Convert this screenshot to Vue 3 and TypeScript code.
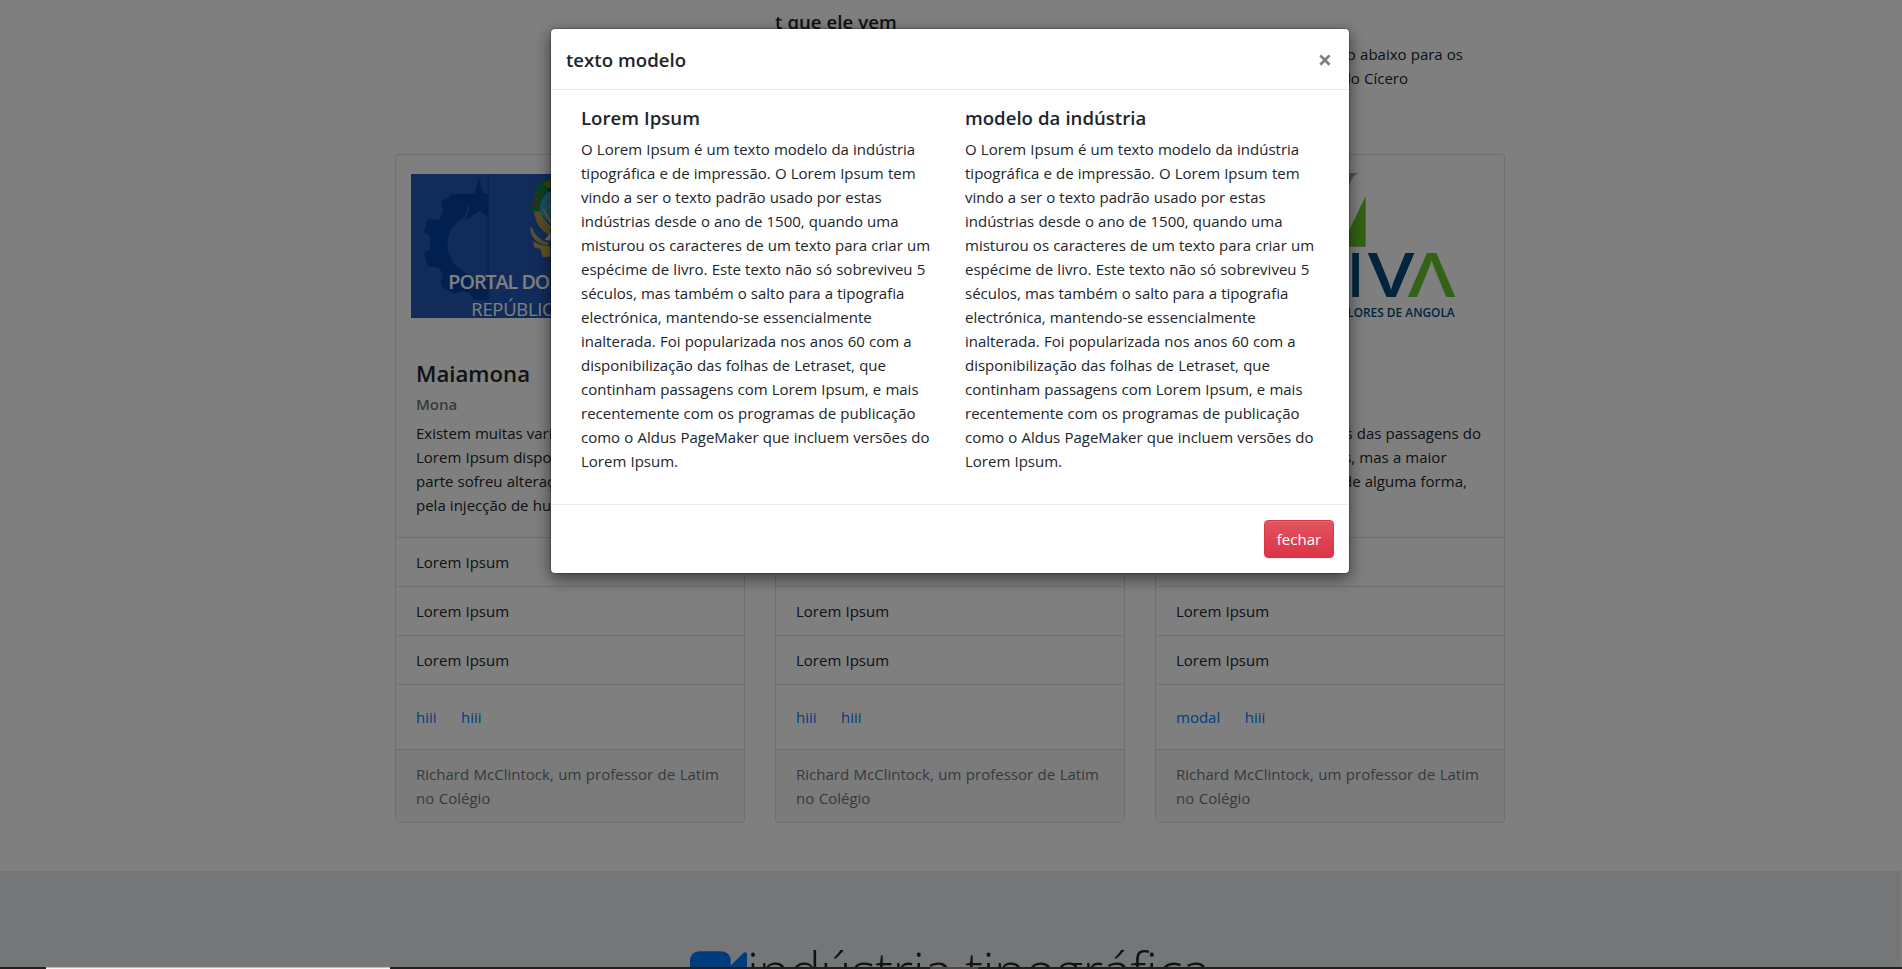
<script setup lang="ts">
interface CardData {
  logo: 'portal' | 'bodiva' | null
  title: string
  subtitle: string
  text: string[]
  links: string[]
}

const body: string[] = [
  'Existem muitas variações das passagens do',
  'Lorem Ipsum disponíveis, mas a maior',
  'parte sofreu alterações de alguma forma,',
  'pela injecção de humor',
]

const cards: CardData[] = [
  { logo: 'portal', title: 'Maiamona', subtitle: 'Mona', text: body, links: ['hiii', 'hiii'] },
  { logo: null, title: 'Maiamona', subtitle: 'Mona', text: body, links: ['hiii', 'hiii'] },
  { logo: 'bodiva', title: 'Maiamona', subtitle: 'Mona', text: body, links: ['modal', 'hiii'] },
]

const items: string[] = ['Lorem Ipsum', 'Lorem Ipsum', 'Lorem Ipsum']

const columns: string[] = ['Lorem Ipsum', 'modelo da indústria']

const lines: string[] = [
  'O Lorem Ipsum é um texto modelo da indústria',
  'tipográfica e de impressão. O Lorem Ipsum tem',
  'vindo a ser o texto padrão usado por estas',
  'indústrias desde o ano de 1500, quando uma',
  'misturou os caracteres de um texto para criar um',
  'espécime de livro. Este texto não só sobreviveu 5',
  'séculos, mas também o salto para a tipografia',
  'electrónica, mantendo-se essencialmente',
  'inalterada. Foi popularizada nos anos 60 com a',
  'disponibilização das folhas de Letraset, que',
  'continham passagens com Lorem Ipsum, e mais',
  'recentemente com os programas de publicação',
  'como o Aldus PageMaker que incluem versões do',
  'Lorem Ipsum.',
]
</script>

<template>
  <div class="screen">
    <main class="page">
      <section class="container">
        <header class="intro">
          <h5>t que ele vem</h5>
          <p>
            <span class="line first">está reproduzido abaixo para os</span>
            <span class="line second">interessados, segundo Cícero</span>
          </p>
        </header>

        <div class="deck">
          <article v-for="(card, i) in cards" :key="i" class="card">
            <div class="media">
              <svg v-if="card.logo === 'portal'" class="logo" viewBox="93 102 954 432">
                <rect x="93" y="102" width="954" height="432" fill="#2358b6" />
                <g fill="#04409f">
                  <path d="M297 112l11 48 17 2v68l-27-17-42 30 14-45-42-36 55-1z" />
                  <path d="M183 185l36-23 20 6 25 27-9 35c-66 32-68 122-15 156 24 22 54 36 85 39v50l-4 5h-41l-9-20-24-6-24 8-38-23-2-12 7-27-17-18-30-2-11-40 19-15v-36l-20-12 13-40 32 2 14-25z" />
                </g>
                <path d="M325 102v432" stroke="#0d459c" stroke-width="4" />
                <path d="M536 112c-46-4-74 32-77 68-3 22-4 35 3 40l20-7c-5-34 12-62 36-70z" fill="#168342" />
                <path d="M490 130l40-17v22l-28 8z" fill="#788a19" />
                <path d="M514 148c-30 20-38 47-34 76l34 28z" fill="#3d9dc9" />
                <path d="M463 214c2 34 20 61 48 72v-22c-18-12-26-24-30-49z" fill="#b89843" />
                <path d="M490 208l24 42M508 197l6 9M480 228l34 38" stroke="#d5bd40" stroke-width="5" />
                <path d="M451 264c0 29 21 49 54 52v-9c-25-4-42-23-49-45z" fill="#b6a260" />
                <path d="M459 304l20 10 32 5v31l-22 2-8-25-18-5z" fill="#c1aa42" />
                <path d="M494 300l18-24v26z" fill="#dedbd2" />
                <circle cx="473" cy="168" r="5" fill="#c82424" />
                <circle cx="466" cy="191" r="5" fill="#c82424" />
                <circle cx="508" cy="150" r="5" fill="#263254" />
                <g class="portal-text">
                  <text x="205" y="446" font-size="59" font-weight="600" textLength="306">PORTAL DO</text>
                  <text x="528" y="446" font-size="59" font-weight="600">GOVERNO</text>
                  <text x="274" y="528" font-size="55" font-weight="400" textLength="247">REPÚBLIC</text>
                </g>
              </svg>
              <svg v-else-if="card.logo === 'bodiva'" class="logo" viewBox="-477 102 954 432">
                <defs>
                  <linearGradient id="silver" x1="0" y1="0" x2="1" y2="0">
                    <stop offset="0" stop-color="#777579" />
                    <stop offset="1" stop-color="#c8c6ca" />
                  </linearGradient>
                </defs>
                <path d="M20 99h74C70 100 66 116 57 139L20 224z" fill="url(#silver)" />
                <path d="M107 168v152H34z" fill="#64c72c" />
                <g class="bodiva-text">
                  <text class="stem" x="55" y="470" textLength="44" lengthAdjust="spacingAndGlyphs">I</text>
                  <text x="113" y="470" textLength="140" lengthAdjust="spacingAndGlyphs">V</text>
                  <text class="green" x="234" y="470" textLength="142" lengthAdjust="spacingAndGlyphs">Λ</text>
                </g>
                <text class="tagline" x="6" y="530" textLength="368" lengthAdjust="spacingAndGlyphs">VALORES DE ANGOLA</text>
              </svg>
            </div>
            <div class="card-body">
              <h4>{{ card.title }}</h4>
              <h6>{{ card.subtitle }}</h6>
              <p><span v-for="t in card.text" :key="t" class="line">{{ t }}</span></p>
            </div>
            <ul>
              <li v-for="(item, k) in items" :key="k">{{ item }}</li>
            </ul>
            <nav>
              <a v-for="(link, k) in card.links" :key="k">{{ link }}</a>
            </nav>
            <footer>
              <span class="line">Richard McClintock, um professor de Latim</span>
              <span class="line">no Colégio</span>
            </footer>
          </article>
        </div>
      </section>

      <section class="jumbotron">
        <svg class="camera" viewBox="0 0 1792 1792">
          <path d="M1792 352v1088q0 42-39 59-13 5-25 5-27 0-45-19l-403-403v166q0 119-84.5 203.5t-203.5 84.5h-704q-119 0-203.5-84.5t-84.5-203.5v-704q0-119 84.5-203.5t203.5-84.5h704q119 0 203.5 84.5t84.5 203.5v165l403-402q18-19 45-19 12 0 25 5 39 17 39 59z" />
        </svg>
        <h1>indústria tipográfica</h1>
      </section>
    </main>

    <div class="backdrop">
      <div class="modal">
        <header>
          <h5>texto modelo</h5>
          <button class="close" type="button">×</button>
        </header>
        <div class="modal-body">
          <section v-for="title in columns" :key="title">
            <h5>{{ title }}</h5>
            <p><span v-for="line in lines" :key="line" class="line">{{ line }}</span></p>
          </section>
        </div>
        <footer>
          <button class="danger" type="button">fechar</button>
        </footer>
      </div>
    </div>

    <div class="taskbar"><i class="window"></i><i class="tab"></i></div>
  </div>
</template>

<style>
body {
  overflow: hidden;
}
</style>

<style scoped>
* {
  box-sizing: border-box;
}
.screen {
  position: relative;
  width: 1902px;
  height: 969px;
  overflow: hidden;
  background: #fff;
  color: #212529;
  font: 400 15px/24px "Open Sans", "Noto Sans", sans-serif;
  word-spacing: 0.25px;
}
h1, h4, h5, h6, p, ul {
  margin: 0;
  padding: 0;
}
.line {
  display: block;
  white-space: nowrap;
}
.page {
  height: 969px;
  overflow: hidden;
}
.container {
  width: 1110px;
  height: 871px;
  margin-left: 395px;
  padding-top: 10px;
}
.intro {
  height: 144px;
  padding-left: 380px;
}
h5 {
  margin-bottom: 8px;
  font-size: 18.6px;
  font-weight: 600;
  line-height: 24px;
}
.intro .line {
  text-align: right;
}
.intro .first {
  width: 688px;
}
.intro .second {
  width: 633px;
}
.deck {
  display: grid;
  grid-template-columns: repeat(3, 350px);
  gap: 30px;
}
.card {
  height: 669px;
  border: 1px solid rgba(0, 0, 0, 0.125);
  border-radius: 4px;
  overflow: hidden;
}
.media {
  height: 184px;
  padding: 19px 15px 0;
}
.logo {
  display: block;
  width: 318px;
  height: 144px;
  overflow: visible;
}
.portal-text {
  fill: #fff;
  font-family: "Open Sans", sans-serif;
}
.bodiva-text {
  fill: #004a78;
  font: 600 183px "Open Sans", sans-serif;
}
.bodiva-text .green {
  fill: #64c72c;
}
.bodiva-text .stem {
  font-weight: 700;
}
.tagline {
  fill: #004a78;
  font: 600 36px "Open Sans", sans-serif;
}
.card-body {
  height: 198px;
  padding: 21px 20px 19px;
}
h4 {
  margin-bottom: 6px;
  font-size: 22.2px;
  font-weight: 600;
  line-height: 28.8px;
}
h6 {
  margin-bottom: 7px;
  color: #6c757d;
  font-size: 15px;
  font-weight: 600;
  line-height: 19.2px;
}
li {
  height: 49px;
  padding: 12px 20px;
  border-top: 1px solid rgba(0, 0, 0, 0.125);
  list-style: none;
}
nav {
  display: flex;
  gap: 24.5px;
  height: 65px;
  padding: 20px;
  border-top: 1px solid rgba(0, 0, 0, 0.125);
  color: #007bff;
}
.card footer {
  height: 74px;
  padding: 12px 20px;
  border-top: 1px solid rgba(0, 0, 0, 0.125);
  background: rgba(0, 0, 0, 0.03);
  color: #6c757d;
  word-spacing: 0.6px;
}
.jumbotron {
  display: flex;
  width: 1901px;
  height: 98px;
  padding: 64px 0 0 690px;
  background: #e9ecef;
}
.camera {
  flex: none;
  width: 57px;
  height: 57px;
  margin-top: 8px;
  fill: #007bff;
}
h1 {
  margin-top: 2px;
  font-size: 53px;
  font-weight: 300;
  line-height: 67px;
  letter-spacing: -0.5px;
  white-space: nowrap;
}
.backdrop {
  position: absolute;
  inset: 0;
  padding: 28px 0 0 550px;
  background: rgba(0, 0, 0, 0.5);
}
.modal {
  width: 800px;
  border: 1px solid rgba(0, 0, 0, 0.2);
  border-radius: 5px;
  background: #fff;
  background-clip: padding-box;
  box-shadow: 0 5px 15px rgba(0, 0, 0, 0.5);
}
.modal header {
  display: flex;
  justify-content: space-between;
  height: 61px;
  padding: 15px;
  border-bottom: 1px solid #e9ecef;
}
.modal header h5 {
  line-height: 31px;
}
.close {
  width: 18px;
  height: 30px;
  padding: 0;
  border: 0;
  background: none;
  color: #000;
  font: 700 25px/26px "Open Sans", sans-serif;
  opacity: 0.5;
}
.modal-body {
  display: grid;
  grid-template-columns: 1fr 1fr;
  height: 414px;
  padding: 15px;
}
.modal-body section {
  padding: 0 15px;
}
.modal-body h5 {
  margin-bottom: 7px;
  line-height: 25px;
}
.modal footer {
  display: flex;
  justify-content: flex-end;
  padding: 15px;
  border-top: 1px solid #e9ecef;
}
.danger {
  width: 70px;
  height: 38px;
  padding: 0;
  border: 1px solid #dc3545;
  border-radius: 4px;
  background: linear-gradient(#e15361, #dc3545);
  box-shadow: inset 0 1px 0 rgba(255, 255, 255, 0.15), 0 1px 1px rgba(0, 0, 0, 0.075);
  color: #fff;
  font: 400 15px/24px "Open Sans", sans-serif;
}
.taskbar {
  position: absolute;
  inset: auto 0 0;
  display: flex;
  gap: 540px;
  height: 2px;
  padding-left: 46px;
  background: #231f20;
}
.window {
  width: 344px;
  border-top: 1px solid #bbb;
  background: #f5f5f5;
}
.tab {
  width: 48px;
  background: #4b484a;
}
</style>
